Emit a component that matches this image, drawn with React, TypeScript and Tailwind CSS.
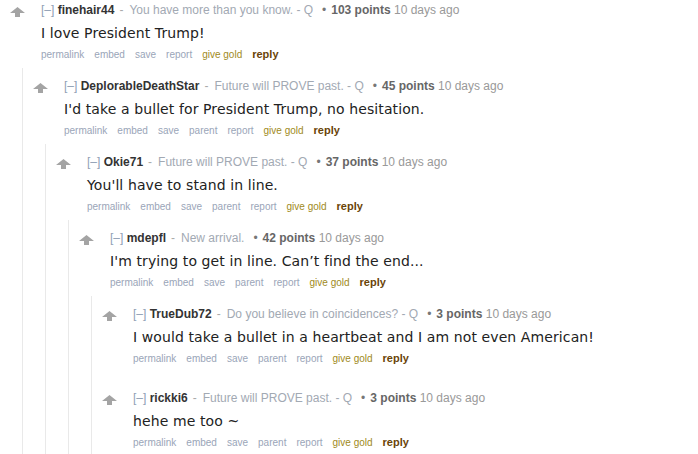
import React from "react";

type CommentData = {
  author: string;
  flair: string;
  points: string;
  body: string;
  parent?: boolean;
  children?: CommentData[];
};

const thread: CommentData = {
  author: "finehair44",
  flair: "You have more than you know. - Q",
  points: "103 points",
  body: "I love President Trump!",
  children: [
    {
      author: "DeplorableDeathStar",
      flair: "Future will PROVE past. - Q",
      points: "45 points",
      body: "I'd take a bullet for President Trump, no hesitation.",
      parent: true,
      children: [
        {
          author: "Okie71",
          flair: "Future will PROVE past. - Q",
          points: "37 points",
          body: "You'll have to stand in line.",
          parent: true,
          children: [
            {
              author: "mdepfl",
              flair: "New arrival.",
              points: "42 points",
              body: "I'm trying to get in line. Can\u2019t find the end...",
              parent: true,
              children: [
                {
                  author: "TrueDub72",
                  flair: "Do you believe in coincidences? - Q",
                  points: "3 points",
                  body: "I would take a bullet in a heartbeat and I am not even American!",
                  parent: true,
                },
                {
                  author: "rickki6",
                  flair: "Future will PROVE past. - Q",
                  points: "3 points",
                  body: "hehe me too ~",
                  parent: true,
                },
              ],
            },
          ],
        },
      ],
    },
  ],
};

function UpArrow() {
  return (
    <svg width="15" height="10" viewBox="0 0 15 10" className="block" aria-hidden="true">
      <polygon points="7.5,0 15,6 10,6 10,10 5,10 5,6 0,6" fill="#a4a4a4" />
    </svg>
  );
}

function Comment({ c }: { c: CommentData }) {
  return (
    <div className="pt-[2px]">
      <div className="flex">
        <div className="w-[41px] shrink-0 pl-[10px] pt-[5px]">
          <UpArrow />
        </div>
        <div className="min-w-0">
          <div className="h-4 leading-4 text-[12px] whitespace-nowrap font-['Liberation_Sans',Arial,sans-serif]">
            <span className="text-[#8fa0b5]">[–]</span>{" "}
            <span className="font-bold text-[#333]">{c.author}</span>
            <span className="text-[#aaa] ml-[5px] mr-[6px]">-</span>
            <span className="text-[#a2a9b3]">{c.flair}</span>
            <span className="text-[#777] ml-[9px] mr-[5px]">•</span>
            <span className="font-bold text-[#666]">{c.points}</span>{" "}
            <span className="text-[#999]">10 days ago</span>
          </div>
          <div className="mt-[6px] h-[18px] leading-[18px] text-[14px] tracking-[0.1px] text-[#222] whitespace-nowrap font-['DejaVu_Sans',Verdana,sans-serif]">
            {c.body}
          </div>
          <div className="mt-[4px] h-4 leading-4 flex items-baseline gap-[10px] text-[10px] whitespace-nowrap font-['Liberation_Sans',Arial,sans-serif]">
            <span className="text-[#9aa5b8]">permalink</span>
            <span className="text-[#9aa5b8]">embed</span>
            <span className="text-[#9aa5b8]">save</span>
            {c.parent && <span className="text-[#9aa5b8]">parent</span>}
            <span className="text-[#9aa5b8]">report</span>
            <span className="text-[#a08a1c]">give gold</span>
            <span className="font-bold text-[11px] text-[#6a4408]">reply</span>
          </div>
        </div>
      </div>
      {c.children && (
        <div className="ml-[22px] mt-[6px] border-l border-[#e9e9e9] pt-[8px] flex flex-col gap-[22px] pb-[200px]">
          {c.children.map((ch) => (
            <Comment key={ch.author} c={ch} />
          ))}
        </div>
      )}
    </div>
  );
}

export default function App() {
  return (
    <div className="w-[698px] h-[454px] overflow-hidden bg-white">
      <Comment c={thread} />
    </div>
  );
}
